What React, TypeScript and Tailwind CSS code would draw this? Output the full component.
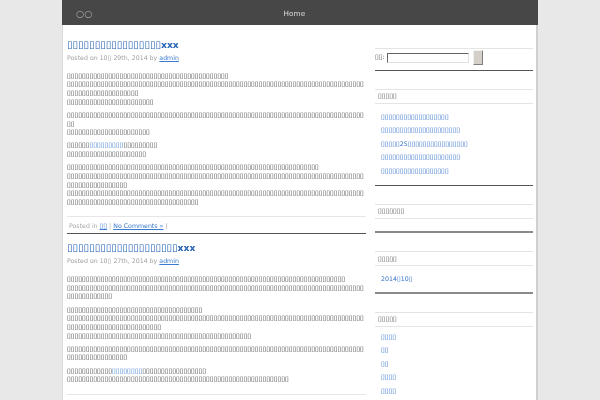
import React from "react";

const BOX = "\u25AF";
const b = (n: number) => BOX.repeat(n);

type Seg = number | string | { l: number };
type Line = Seg[];

function Bx({ n }: { n: number }) {
  return <span className="text-[1.093em]">{b(n)}</span>;
}

function Segs({ line }: { line: Line }) {
  return (
    <div className="whitespace-nowrap">
      {line.map((s, i) => {
        if (typeof s === "number") return <Bx key={i} n={s} />;
        if (typeof s === "string") return <span key={i}>{s}</span>;
        return (
          <a key={i} href="#" className="text-[#3b7bd0]">
            <Bx n={s.l} />
          </a>
        );
      })}
    </div>
  );
}

function Para({ lines, last }: { lines: Line[]; last?: boolean }) {
  return (
    <div className={last ? "" : "mb-[4.5px]"}>
      {lines.map((l, i) => (
        <Segs key={i} line={l} />
      ))}
    </div>
  );
}

function Post({
  title,
  date,
  paras,
  first,
}: {
  title: number;
  date: string;
  paras: Line[][];
  first?: boolean;
}) {
  return (
    <div className={first ? "" : "pt-[8px]"}>
      <h2 className="text-[9.2px] font-bold leading-[12px] text-[#2562b5] whitespace-nowrap">
        <a href="#">
          <Bx n={title} />
          xxx
        </a>
      </h2>
      <div className="mt-[2.7px] text-[#a0a0a0] whitespace-nowrap">
        Posted on 10<Bx n={1} /> {date}, 2014 by{" "}
        <a href="#" className="text-[#3b7bd0] underline">
          admin
        </a>
      </div>
      <div className="mt-[9.4px] text-[#3a3a3a]">
        {paras.map((p, i) => (
          <Para key={i} lines={p} last={i === paras.length - 1} />
        ))}
      </div>
    </div>
  );
}

function WidgetHead({ n }: { n: number }) {
  return (
    <div className="mt-[18px] h-[15px] border-y border-[#e4e4e4] pl-[3px] flex items-center text-[#555]">
      <Bx n={n} />
    </div>
  );
}

function LinkList({ items, pb, pt }: { items: Line[]; pb?: string; pt?: string }) {
  return (
    <ul className={"pl-[6px] " + (pt ?? "pt-[5.7px]") + " " + (pb ?? "pb-[7.7px]")}>
      {items.map((it, i) => (
        <li key={i} className="h-[13.5px] leading-[13.5px] whitespace-nowrap">
          <a href="#" className="text-[#2f6fc8]">
            {it.map((s, j) =>
              typeof s === "number" ? (
                <Bx key={j} n={s} />
              ) : (
                <span key={j}>{s as string}</span>
              )
            )}
          </a>
        </li>
      ))}
    </ul>
  );
}

export default function App() {
  const post1: Line[][] = [
    [[43], [79], [19], [23]],
    [[79], [2], [22]],
    [[6, { l: 9 }, 9], [21]],
    [[67], [79], [16], [79], [35]],
  ];
  const post2: Line[][] = [
    [[74], [79], [12]],
    [[36], [79], [25], [49]],
    [[79], [16]],
    [[12, { l: 8 }, 17], [59]],
  ];

  return (
    <div className="min-h-[400px] bg-[#e8e8e8] font-['DejaVu_Sans',sans-serif] text-[6.25px] leading-[8.67px] will-change-transform antialiased">
      <div className="mx-auto w-[476px] min-h-[400px] flex flex-col">
        <header className="h-[25px] bg-[#474747] flex items-center pt-[3px]">
          <div className="pl-[14px] text-[9.5px] leading-none text-[#b0b0b0]">○○</div>
          <nav className="ml-[191px] text-[7.3px] leading-none text-[#dddddd]">Home</nav>
        </header>
        <div className="flex-1 flex bg-white border-l border-l-[#dcdcdc] border-r-2 border-r-[#d0d0d0] pl-[4px] pr-[3px]">
          <main className="w-[299px] pt-[14px]">
            <Post title={17} date="29th" paras={post1} first />
            <div className="mt-[9px] border-t border-[#e6e6e6] pt-[5px] pb-[3px] border-b border-b-[#555] pl-[2px] text-[#a8a8a8] whitespace-nowrap">
              Posted in{" "}
              <a href="#" className="text-[#3b7bd0] underline">
                <Bx n={2} />
              </a>{" "}
              |{" "}
              <a href="#" className="text-[#3b7bd0] underline">
                No Comments »
              </a>{" "}
              |
            </div>
            <Post title={20} date="27th" paras={post2} />
            <div className="mt-[10px] border-t border-[#e6e6e6]" />
          </main>
          <aside className="ml-[9px] w-[158px] pt-[23px]">
            <div className="border-t border-[#e4e4e4] border-b border-b-[#555] h-[23px] pb-[4px] flex items-center text-[#555]">
              <span>
                <Bx n={2} />:
              </span>
              <span className="ml-[2px] w-[82px] h-[10px] border border-t-[#666] border-l-[#666] border-r-[#e0e0e0] border-b-[#e0e0e0] bg-white" />
              <span className="ml-[4px] w-[10px] h-[15px] bg-[#d4d0c8] border border-t-[#f0f0f0] border-l-[#f0f0f0] border-r-[#808080] border-b-[#808080]" />
            </div>

            <WidgetHead n={5} />
            <div className="border-b border-b-[#555]">
              <LinkList items={[[18], [21], [5, "25", 16], [21], [18]]} />
            </div>

            <WidgetHead n={7} />
            <div className="h-[12.5px] border-b-2 border-b-[#8a8a8a] box-content" />

            <WidgetHead n={5} />
            <div className="border-b-2 border-b-[#8a8a8a]">
              <LinkList items={[["2014", 1, "10", 1]]} pb="pb-[6.3px]" />
            </div>

            <WidgetHead n={5} />
            <LinkList items={[[4], [2], [2], [4], [4]]} pt="pt-[3px]" />
          </aside>
        </div>
      </div>
    </div>
  );
}
